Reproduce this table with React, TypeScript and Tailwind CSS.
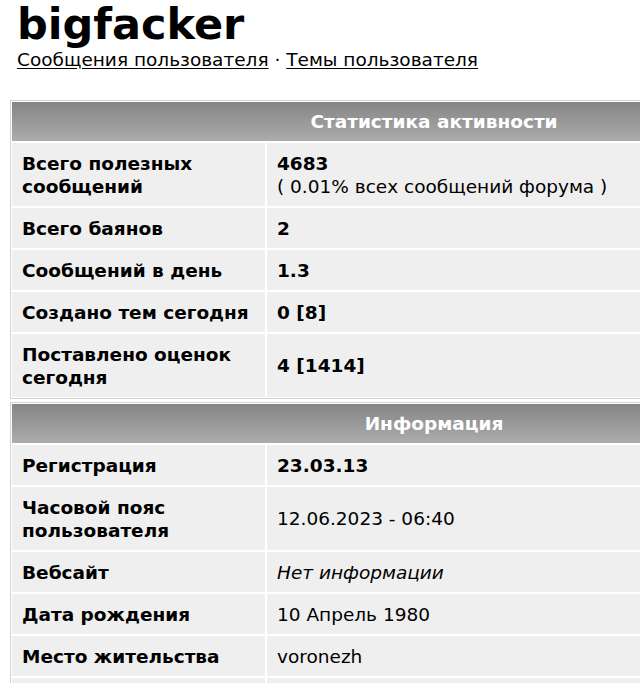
export default function App() {
  const stats: [string, React.ReactNode, boolean][] = [
    [
      "Всего полезных сообщений",
      <>
        <span className="font-bold">4683</span>
        <br />( 0.01% всех сообщений форума )
      </>,
      false,
    ],
    ["Всего баянов", "2", true],
    ["Сообщений в день", "1.3", true],
    ["Создано тем сегодня", "0 [8]", true],
    ["Поставлено оценок сегодня", "4 [1414]", true],
  ];

  const info: [string, React.ReactNode, boolean][] = [
    ["Регистрация", "23.03.13", true],
    ["Часовой пояс пользователя", "12.06.2023 - 06:40", false],
    ["Вебсайт", <i>Нет информации</i>, false],
    ["Дата рождения", "10 Апрель 1980", false],
    ["Место жительства", "voronezh", false],
    ["", "", false],
  ];

  return (
    <div className="w-[640px] h-[683px] overflow-hidden bg-white text-black font-['DejaVu_Sans',sans-serif]">
      <div className="px-[17px]">
        <h1 className="text-[43px] font-bold leading-[48px]">bigfacker</h1>
        <div className="mt-[2px] text-[18.5px] leading-[20px]">
          <a href="#" className="underline underline-offset-2">Сообщения пользователя</a>
          {" · "}
          <a href="#" className="underline underline-offset-2">Темы пользователя</a>
        </div>
      </div>

      <div className="ml-[10px] mt-[30px] w-[848px] flex flex-col gap-[3px]">
        <Table title="Статистика активности" rows={stats} />
        <Table title="Информация" rows={info} />
      </div>
    </div>
  );
}

function Table({
  title,
  rows,
}: {
  title: string;
  rows: [string, React.ReactNode, boolean][];
}) {
  return (
    <div className="border border-[#d2d2d2] bg-white p-px flex flex-col gap-[2px]">
      <div className="h-[39px] flex items-center justify-center bg-linear-to-b from-[#858585] to-[#acacac] text-white font-bold text-[18.5px]">
        {title}
      </div>
      {rows.map(([label, value, bold], i) => (
        <div key={i} className="grid grid-cols-[253px_1fr] gap-[2px] text-[18.5px] leading-[23px]">
          <div className="bg-[#efefef] pl-[10px] pr-[4px] py-[8.5px] font-bold flex items-center min-h-[40px]">
            {label}
          </div>
          <div className={`bg-[#efefef] px-[10px] py-[8.5px] flex items-center min-h-[40px] ${bold ? "font-bold" : ""}`}>
            <div>{value}</div>
          </div>
        </div>
      ))}
    </div>
  );
}
